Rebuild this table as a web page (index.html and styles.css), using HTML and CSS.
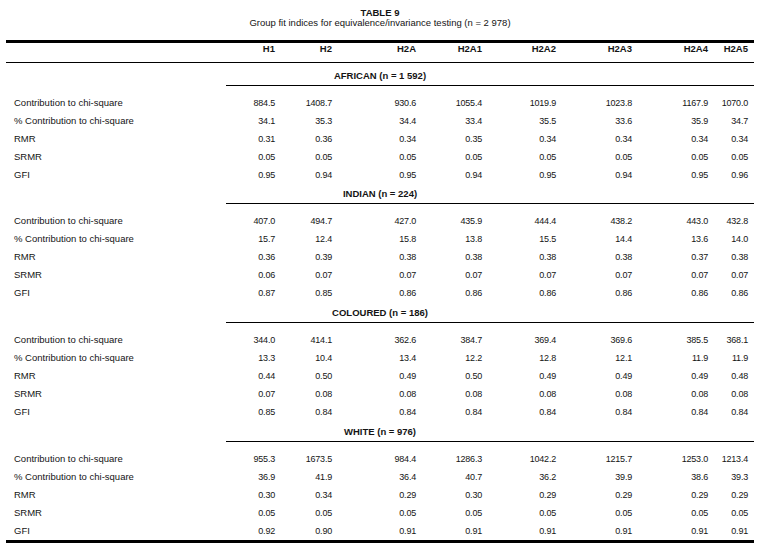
FILE: index.html
```html
<!DOCTYPE html>
<html lang="en">
<head>
<meta charset="utf-8">
<title>TABLE 9</title>
<link rel="stylesheet" href="styles.css">
</head>
<body>
<div class="page">
  <div class="caption">
    <div class="cap-title">TABLE 9</div>
    <div class="cap-sub">Group fit indices for equivalence/invariance testing (n = 2 978)</div>
  </div>
  <table class="fit">
    <colgroup>
      <col class="c-label"><col class="c-h1"><col class="c-h2"><col class="c-h2a"><col class="c-h2a1"><col class="c-h2a2"><col class="c-h2a3"><col class="c-h2a4"><col class="c-h2a5">
    </colgroup>
    <thead>
      <tr><th></th><th>H1</th><th>H2</th><th>H2A</th><th>H2A1</th><th>H2A2</th><th>H2A3</th><th>H2A4</th><th>H2A5</th></tr>
    </thead>
    <tbody class="group first">
      <tr class="group-title"><th colspan="9">AFRICAN (n = 1 592)</th></tr>
      <tr class="rule-row"><td></td><td class="rule" colspan="8"></td></tr>
      <tr><td>Contribution to chi-square</td><td>884.5</td><td>1408.7</td><td>930.6</td><td>1055.4</td><td>1019.9</td><td>1023.8</td><td>1167.9</td><td>1070.0</td></tr>
      <tr><td>% Contribution to chi-square</td><td>34.1</td><td>35.3</td><td>34.4</td><td>33.4</td><td>35.5</td><td>33.6</td><td>35.9</td><td>34.7</td></tr>
      <tr><td>RMR</td><td>0.31</td><td>0.36</td><td>0.34</td><td>0.35</td><td>0.34</td><td>0.34</td><td>0.34</td><td>0.34</td></tr>
      <tr><td>SRMR</td><td>0.05</td><td>0.05</td><td>0.05</td><td>0.05</td><td>0.05</td><td>0.05</td><td>0.05</td><td>0.05</td></tr>
      <tr><td>GFI</td><td>0.95</td><td>0.94</td><td>0.95</td><td>0.94</td><td>0.95</td><td>0.94</td><td>0.95</td><td>0.96</td></tr>
    </tbody>
    <tbody class="group">
      <tr class="group-title"><th colspan="9">INDIAN (n = 224)</th></tr>
      <tr class="rule-row"><td></td><td class="rule" colspan="8"></td></tr>
      <tr><td>Contribution to chi-square</td><td>407.0</td><td>494.7</td><td>427.0</td><td>435.9</td><td>444.4</td><td>438.2</td><td>443.0</td><td>432.8</td></tr>
      <tr><td>% Contribution to chi-square</td><td>15.7</td><td>12.4</td><td>15.8</td><td>13.8</td><td>15.5</td><td>14.4</td><td>13.6</td><td>14.0</td></tr>
      <tr><td>RMR</td><td>0.36</td><td>0.39</td><td>0.38</td><td>0.38</td><td>0.38</td><td>0.38</td><td>0.37</td><td>0.38</td></tr>
      <tr><td>SRMR</td><td>0.06</td><td>0.07</td><td>0.07</td><td>0.07</td><td>0.07</td><td>0.07</td><td>0.07</td><td>0.07</td></tr>
      <tr><td>GFI</td><td>0.87</td><td>0.85</td><td>0.86</td><td>0.86</td><td>0.86</td><td>0.86</td><td>0.86</td><td>0.86</td></tr>
    </tbody>
    <tbody class="group gap">
      <tr class="group-title"><th colspan="9">COLOURED (n = 186)</th></tr>
      <tr class="rule-row"><td></td><td class="rule" colspan="8"></td></tr>
      <tr><td>Contribution to chi-square</td><td>344.0</td><td>414.1</td><td>362.6</td><td>384.7</td><td>369.4</td><td>369.6</td><td>385.5</td><td>368.1</td></tr>
      <tr><td>% Contribution to chi-square</td><td>13.3</td><td>10.4</td><td>13.4</td><td>12.2</td><td>12.8</td><td>12.1</td><td>11.9</td><td>11.9</td></tr>
      <tr><td>RMR</td><td>0.44</td><td>0.50</td><td>0.49</td><td>0.50</td><td>0.49</td><td>0.49</td><td>0.49</td><td>0.48</td></tr>
      <tr><td>SRMR</td><td>0.07</td><td>0.08</td><td>0.08</td><td>0.08</td><td>0.08</td><td>0.08</td><td>0.08</td><td>0.08</td></tr>
      <tr><td>GFI</td><td>0.85</td><td>0.84</td><td>0.84</td><td>0.84</td><td>0.84</td><td>0.84</td><td>0.84</td><td>0.84</td></tr>
    </tbody>
    <tbody class="group gap last">
      <tr class="group-title"><th colspan="9">WHITE (n = 976)</th></tr>
      <tr class="rule-row"><td></td><td class="rule" colspan="8"></td></tr>
      <tr><td>Contribution to chi-square</td><td>955.3</td><td>1673.5</td><td>984.4</td><td>1286.3</td><td>1042.2</td><td>1215.7</td><td>1253.0</td><td>1213.4</td></tr>
      <tr><td>% Contribution to chi-square</td><td>36.9</td><td>41.9</td><td>36.4</td><td>40.7</td><td>36.2</td><td>39.9</td><td>38.6</td><td>39.3</td></tr>
      <tr><td>RMR</td><td>0.30</td><td>0.34</td><td>0.29</td><td>0.30</td><td>0.29</td><td>0.29</td><td>0.29</td><td>0.29</td></tr>
      <tr><td>SRMR</td><td>0.05</td><td>0.05</td><td>0.05</td><td>0.05</td><td>0.05</td><td>0.05</td><td>0.05</td><td>0.05</td></tr>
      <tr class="final"><td>GFI</td><td>0.92</td><td>0.90</td><td>0.91</td><td>0.91</td><td>0.91</td><td>0.91</td><td>0.91</td><td>0.91</td></tr>
    </tbody>
  </table>
</div>
</body>
</html>
```

FILE: styles.css
```css
html, body {
  margin: 0;
  padding: 0;
  background: #ffffff;
}

body {
  font-family: "Liberation Sans", Arial, sans-serif;
  font-size: 9.5px;
  color: #141414;
}

.page {
  padding: 8px 0 0 6px;
  width: 748px;
}

.caption {
  text-align: center;
  line-height: 10px;
}

.cap-title {
  font-weight: bold;
}

.fit {
  margin-top: 12px;
  width: 748px;
  table-layout: fixed;
  border-collapse: separate;
  border-spacing: 0;
}

.c-label { width: 220px; }
.c-h1 { width: 55px; }
.c-h2 { width: 57px; }
.c-h2a { width: 84px; }
.c-h2a1 { width: 66px; }
.c-h2a2 { width: 74px; }
.c-h2a3 { width: 76px; }
.c-h2a4 { width: 76px; }
.c-h2a5 { width: 40px; }

.fit th,
.fit td {
  padding: 0 6px 0 0;
  text-align: right;
  white-space: nowrap;
  font-weight: normal;
}

.fit thead th {
  font-weight: bold;
  line-height: 12px;
  padding-bottom: 7px;
  border-top: 3px solid #000;
  border-bottom: 1px solid #000;
}

.fit .group-title th {
  font-weight: bold;
  text-align: center;
  line-height: 19px;
  padding: 0;
}

.fit .first .group-title th {
  padding-top: 3px;
}

.fit .gap .group-title th {
  padding-top: 1px;
}

.fit .rule-row td {
  height: 8px;
  padding: 0;
  line-height: 0;
}

.fit .rule-row .rule {
  border-top: 1px solid #000;
}

.fit tbody td {
  line-height: 18px;
  font-size: 9px;
  letter-spacing: -0.2px;
}

.fit tbody td:first-child {
  text-align: left;
  padding-left: 8px;
  font-size: 9.5px;
  letter-spacing: 0;
}

.fit .final td {
  border-bottom: 3px solid #000;
}
```
